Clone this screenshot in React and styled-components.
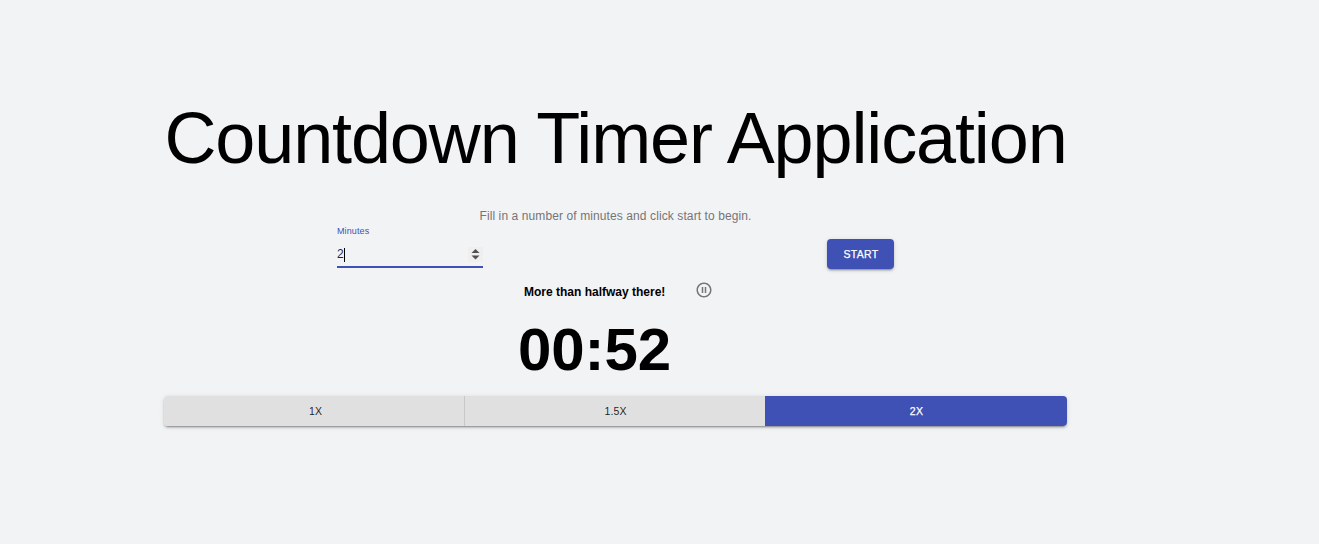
import React from "react";
import styled, { createGlobalStyle } from "styled-components";

const GlobalStyle = createGlobalStyle`
  * { box-sizing: border-box; }
  body {
    margin: 0;
    background: #f2f3f5;
    color: #000;
    font-family: "Liberation Sans", Arial, sans-serif;
    font-size: 12px;
  }
`;

const Page = styled.main`
  width: 903px;
  min-height: 544px;
  margin-left: 164px;
  padding-top: 96px;
`;

const Title = styled.h1`
  margin: 0;
  font-size: 72px;
  font-weight: 400;
  line-height: 84px;
  letter-spacing: -1.125px;
  text-align: center;
  white-space: nowrap;
`;

const Hint = styled.p`
  margin: 27px 0 0;
  height: 18px;
  line-height: 18px;
  letter-spacing: 0.1px;
  text-align: center;
  color: #757575;
`;

const Form = styled.form`
  display: flex;
  justify-content: space-between;
  align-items: flex-start;
  padding: 0 173px;
`;

const Field = styled.div`
  width: 146px;
  height: 43px;
  display: flex;
  flex-direction: column;
  border-bottom: 2px solid #3f51b5;
`;

const Label = styled.label`
  height: 12px;
  line-height: 12px;
  font-size: 9px;
  letter-spacing: 0.11px;
  color: #3f51b5;
`;

const InputRow = styled.div`
  display: flex;
  align-items: center;
  justify-content: space-between;
  height: 15px;
  margin-top: 10px;
  color: rgba(0, 0, 0, 0.87);
`;

const Value = styled.span`
  display: flex;
  align-items: center;
  line-height: 15px;
`;

const Caret = styled.span`
  width: 1px;
  height: 14px;
  background: #000;
`;

const Spinner = styled.svg`
  width: 15px;
  height: 15px;
  background: #efefef;
`;

const Button = styled.button`
  width: ${(p) => p.$width || "auto"};
  height: 30px;
  margin: ${(p) => p.$margin || 0};
  padding: 0 15px 0 16px;
  border: 0;
  border-right: ${(p) => (p.$divider ? "1px solid #c8c8c8" : "0")};
  border-radius: ${(p) => p.$radius || "4px"};
  background: ${(p) => (p.$primary ? "#3f51b5" : "#e0e0e0")};
  color: ${(p) => (p.$primary ? "#fff" : "rgba(0, 0, 0, 0.87)")};
  font: 400 10.5px/30px "Liberation Sans", Arial, sans-serif;
  -webkit-text-stroke: ${(p) => (p.$primary ? "0.25px #fff" : "0")};
  letter-spacing: ${(p) => (p.$primary ? "0.3px" : "0.15px")};
  text-indent: ${(p) => (p.$divider ? "2px" : "0")};
  box-shadow: ${(p) =>
    p.$flat
      ? "none"
      : "0 3px 1px -2px rgba(0,0,0,.2), 0 2px 2px 0 rgba(0,0,0,.14), 0 1px 5px 0 rgba(0,0,0,.12)"};
`;

const Status = styled.div`
  display: flex;
  align-items: flex-start;
  height: 18px;
  margin: 13px 0 0 360px;
`;

const Message = styled.strong`
  width: 171px;
  padding-top: 1px;
  line-height: 18px;
  white-space: nowrap;
`;

const PauseIcon = styled.svg`
  width: 18px;
  height: 18px;
  margin-top: -1px;
  fill: #757575;
`;

const Time = styled.div`
  margin: 16px 0 0 354px;
  height: 68px;
  font-size: 60px;
  font-weight: 700;
  line-height: 68px;
  letter-spacing: -0.1px;
`;

const Speeds = styled.div`
  display: flex;
  height: 30px;
  margin-top: 12px;
  border-radius: 4px;
  box-shadow: 0 3px 1px -2px rgba(0, 0, 0, 0.2), 0 2px 2px 0 rgba(0, 0, 0, 0.14),
    0 1px 5px 0 rgba(0, 0, 0, 0.12);
`;

export default function App() {
  return (
    <>
      <GlobalStyle />
      <Page>
        <Title>Countdown Timer Application</Title>
        <Hint>Fill in a number of minutes and click start to begin.</Hint>
        <Form onSubmit={(e) => e.preventDefault()}>
          <Field>
            <Label>Minutes</Label>
            <InputRow>
              <Value>2<Caret /></Value>
              <Spinner viewBox="0 0 15 15">
                <path d="M3.5 6 7.5 2l4 4zM3.5 8.5h8l-4 4z" fill="#505050" />
              </Spinner>
            </InputRow>
          </Field>
          <Button $primary $width="67px" $margin="14px 0 0">START</Button>
        </Form>
        <Status>
          <Message>More than halfway there!</Message>
          <PauseIcon viewBox="0 0 24 24">
            <path d="M9 16h2V8H9v8zm3-14C6.48 2 2 6.48 2 12s4.48 10 10 10 10-4.48 10-10S17.52 2 12 2zm0 18c-4.41 0-8-3.59-8-8s3.59-8 8-8 8 3.59 8 8-3.59 8-8 8zm1-4h2V8h-2v8z" />
          </PauseIcon>
        </Status>
        <Time>00:52</Time>
        <Speeds>
          <Button $flat $divider $width="301px" $radius="4px 0 0 4px">1X</Button>
          <Button $flat $width="300px" $radius="0">1.5X</Button>
          <Button $flat $primary $width="302px" $radius="0 4px 4px 0">2X</Button>
        </Speeds>
      </Page>
    </>
  );
}
